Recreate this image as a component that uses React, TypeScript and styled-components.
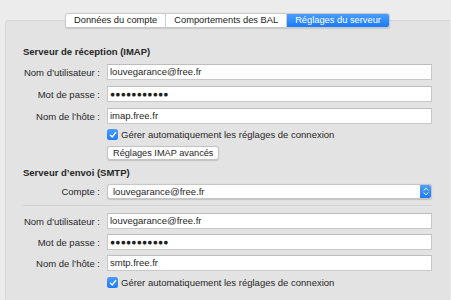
import React from "react";
import styled, { createGlobalStyle } from "styled-components";

const Global = createGlobalStyle`
  html, body { margin: 0; padding: 0; background: #ececec; }
  body {
    font-family: "Liberation Sans", Arial, sans-serif;
    font-size: 9.5px;
    color: #262626;
    -webkit-font-smoothing: antialiased;
  }
`;

const Page = styled.div`
  width: 451px;
  height: 300px;
  overflow: hidden;
  box-sizing: border-box;
  padding: 13px 1px 0 5px;
`;

const TabBar = styled.div`
  display: flex;
  justify-content: center;
  position: relative;
  z-index: 1;
`;

const TabGroup = styled.div`
  display: flex;
  border: 1px solid #c9c9c9;
  border-radius: 3px;
  background: #ffffff;
  box-shadow: 0 0.5px 1px rgba(0, 0, 0, 0.12);
  overflow: hidden;
`;

const Tab = styled.div<{ $active?: boolean }>`
  height: 13px;
  line-height: 13px;
  padding: 0 8px;
  font-size: 9.3px;
  white-space: nowrap;
  color: ${(p) => (p.$active ? "#ffffff" : "#222")};
  background: ${(p) =>
    p.$active ? "linear-gradient(#4a9dfd, #1b7bf8)" : "#ffffff"};
  & + & {
    border-left: 1px solid #d0d0d0;
  }
`;

const Panel = styled.div`
  margin-top: -8px;
  border: 1px solid #d6d6d6;
  border-right: none;
  border-radius: 4px 0 0 4px;
  background: #e3e3e3;
  padding: 25px 18px 20px 17px;
  height: 300px;
  box-sizing: border-box;
`;

const Heading = styled.div<{ $mt?: number }>`
  font-weight: bold;
  line-height: 12px;
  margin-top: ${(p) => p.$mt ?? 0}px;
`;

const Row = styled.div<{ $mt: number }>`
  display: grid;
  grid-template-columns: 77px 325px;
  column-gap: 7px;
  align-items: center;
  margin-top: ${(p) => p.$mt}px;
`;

const Label = styled.div`
  text-align: right;
  white-space: nowrap;
`;

const Field = styled.div<{ $dots?: boolean }>`
  height: 16px;
  box-sizing: border-box;
  border: 1px solid #c8c8c8;
  border-top-color: #bdbdbd;
  background: #ffffff;
  padding: 0 2px;
  line-height: 14px;
  white-space: nowrap;
  color: #1f1f1f;
  letter-spacing: ${(p) => (p.$dots ? "0.2px" : "0")};
  font-size: ${(p) => (p.$dots ? "8.5px" : "9.5px")};
`;

const Popup = styled.div`
  height: 15px;
  box-sizing: border-box;
  border: 1px solid #c6c6c6;
  border-radius: 3px;
  background: #ffffff;
  box-shadow: 0 0.5px 1px rgba(0, 0, 0, 0.15);
  display: flex;
  align-items: center;
  overflow: hidden;
`;

const PopupText = styled.div`
  flex: 1;
  padding-left: 5px;
  line-height: 13px;
`;

const Stepper = styled.div`
  width: 12px;
  height: 15px;
  margin: -1px -1px -1px 0;
  background: linear-gradient(#55a3fd, #1a78f6);
  border-radius: 0 3px 3px 0;
  display: flex;
  align-items: center;
  justify-content: center;
`;

const CheckRow = styled.div<{ $mt: number }>`
  display: flex;
  align-items: center;
  gap: 3px;
  margin-left: 84px;
  margin-top: ${(p) => p.$mt}px;
  line-height: 11px;
`;

const Box = styled.div`
  width: 11px;
  height: 11px;
  box-sizing: border-box;
  border-radius: 2.5px;
  background: linear-gradient(#4a9dfd, #1b7bf8);
  display: flex;
  align-items: center;
  justify-content: center;
`;

const Button = styled.div`
  margin-left: 84px;
  margin-top: 6px;
  display: inline-block;
  height: 14px;
  box-sizing: border-box;
  line-height: 12px;
  padding: 0 5px;
  font-size: 9.2px;
  border: 1px solid #c4c4c4;
  border-radius: 3px;
  background: #ffffff;
  box-shadow: 0 0.5px 1px rgba(0, 0, 0, 0.15);
  white-space: nowrap;
`;

const Separator = styled.div`
  height: 1px;
  background: #d2d2d2;
  width: 409px;
  margin-top: 6px;
`;

const Check = () => (
  <Box>
    <svg width="8" height="8" viewBox="0 0 8 8">
      <path
        d="M1.5 4.2 L3.2 6 L6.6 1.6"
        fill="none"
        stroke="#fff"
        strokeWidth="1.4"
        strokeLinecap="round"
        strokeLinejoin="round"
      />
    </svg>
  </Box>
);

const Arrows = () => (
  <svg width="6" height="9" viewBox="0 0 6 9">
    <path
      d="M1 3.2 L3 1.2 L5 3.2 M1 5.8 L3 7.8 L5 5.8"
      fill="none"
      stroke="#fff"
      strokeWidth="1"
      strokeLinecap="round"
      strokeLinejoin="round"
    />
  </svg>
);

const DOTS = "●●●●●●●●●●●";

export default function App() {
  return (
    <>
      <Global />
      <Page>
        <TabBar>
          <TabGroup>
            <Tab>Données du compte</Tab>
            <Tab>Comportements des BAL</Tab>
            <Tab $active>Réglages du serveur</Tab>
          </TabGroup>
        </TabBar>
        <Panel>
          <Heading>Serveur de réception (IMAP)</Heading>
          <Row $mt={6}>
            <Label>Nom d’utilisateur :</Label>
            <Field>louvegarance@free.fr</Field>
          </Row>
          <Row $mt={6}>
            <Label>Mot de passe :</Label>
            <Field $dots>{DOTS}</Field>
          </Row>
          <Row $mt={6}>
            <Label>Nom de l’hôte :</Label>
            <Field>imap.free.fr</Field>
          </Row>
          <CheckRow $mt={5}>
            <Check />
            <span>Gérer automatiquement les réglages de connexion</span>
          </CheckRow>
          <Button>Réglages IMAP avancés</Button>
          <Heading $mt={7}>Serveur d’envoi (SMTP)</Heading>
          <Row $mt={5}>
            <Label>Compte :</Label>
            <Popup>
              <PopupText>louvegarance@free.fr</PopupText>
              <Stepper>
                <Arrows />
              </Stepper>
            </Popup>
          </Row>
          <Separator />
          <Row $mt={7}>
            <Label>Nom d’utilisateur :</Label>
            <Field>louvegarance@free.fr</Field>
          </Row>
          <Row $mt={5}>
            <Label>Mot de passe :</Label>
            <Field $dots>{DOTS}</Field>
          </Row>
          <Row $mt={5}>
            <Label>Nom de l’hôte :</Label>
            <Field>smtp.free.fr</Field>
          </Row>
          <CheckRow $mt={6}>
            <Check />
            <span>Gérer automatiquement les réglages de connexion</span>
          </CheckRow>
        </Panel>
      </Page>
    </>
  );
}
